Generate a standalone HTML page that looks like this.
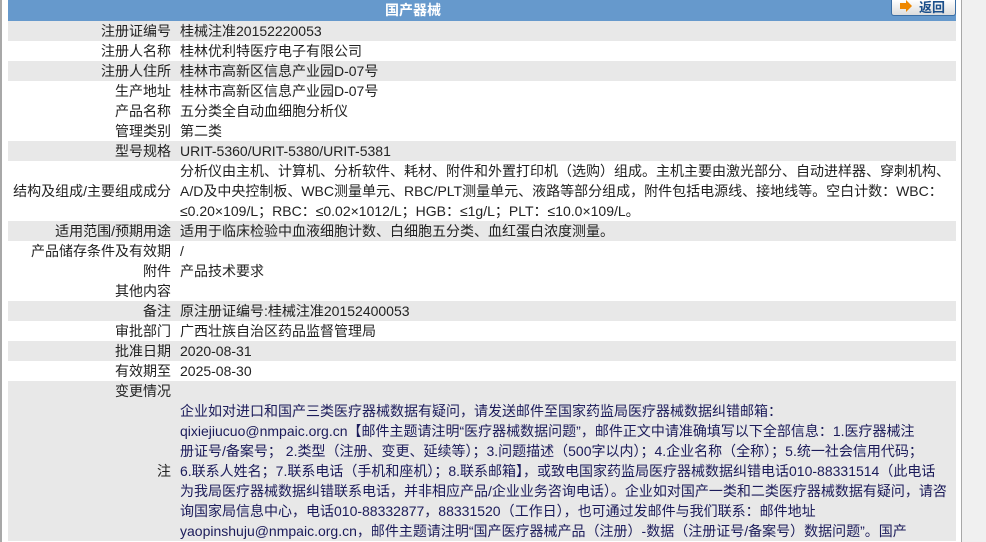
<!DOCTYPE html>
<html><head><meta charset="utf-8">
<style>
html,body{margin:0;padding:0;width:986px;height:542px;overflow:hidden;background:#fff;}
body{font-family:"Liberation Sans","Noto Sans CJK SC",sans-serif;font-size:14px;color:#222;position:relative;}
.side{position:absolute;left:961px;top:0;width:25px;height:542px;background:#f0f0f0;border-left:1px solid #a8a8a8;}
.lb{position:absolute;left:0;top:0;width:2px;height:542px;background:#a8a8a8;}
.wrap{position:absolute;left:8px;top:0;width:948px;}
.hd{height:21px;background:#6699cc;position:relative;}
.hd .t{position:absolute;left:0;width:810px;text-align:center;top:0;line-height:20px;color:#fff;font-weight:bold;font-size:14px;}
.btn{position:absolute;left:883px;top:0;width:63px;height:15px;border:1px solid #3a6ea5;border-top:none;border-radius:0 0 3px 3px;background:linear-gradient(#fff,#dcdcdc);font-size:13px;font-weight:bold;color:#1a4e8a;line-height:15px;}
.btn .a{position:absolute;left:8px;top:3px;width:6px;height:6px;background:#ee8800;}
.btn .a:after{content:"";position:absolute;left:6px;top:-3px;border-left:6px solid #ee8800;border-top:6px solid transparent;border-bottom:6px solid transparent;}
.btn .x{position:absolute;left:27px;top:0;}
table{border-collapse:collapse;width:948px;table-layout:fixed;}
td{padding:0;line-height:20px;vertical-align:middle;white-space:nowrap;}
td.l{width:163px;text-align:right;padding-right:9px;}
td.v{padding-left:0;}
tr.g td{background:#e8e8e8;}
.note{color:#1b1b5a;}
</style></head><body>
<div class="lb"></div>
<div class="side"></div>
<div class="wrap">
<div class="hd"><div class="t">国产器械</div><div class="btn"><span class="a"></span><span class="x">返回</span></div></div>
<table>
<tr class="g"><td class="l">注册证编号</td><td class="v">桂械注准20152220053</td></tr>
<tr><td class="l">注册人名称</td><td class="v">桂林优利特医疗电子有限公司</td></tr>
<tr class="g"><td class="l">注册人住所</td><td class="v">桂林市高新区信息产业园D-07号</td></tr>
<tr><td class="l">生产地址</td><td class="v">桂林市高新区信息产业园D-07号</td></tr>
<tr><td class="l">产品名称</td><td class="v">五分类全自动血细胞分析仪</td></tr>
<tr><td class="l">管理类别</td><td class="v">第二类</td></tr>
<tr class="g"><td class="l">型号规格</td><td class="v">URIT-5360/URIT-5380/URIT-5381</td></tr>
<tr><td class="l">结构及组成/主要组成成分</td><td class="v">分析仪由主机、计算机、分析软件、耗材、附件和外置打印机（选购）组成。主机主要由激光部分、自动进样器、穿刺机构、<br>A/D及中央控制板、WBC测量单元、RBC/PLT测量单元、液路等部分组成，附件包括电源线、接地线等。空白计数：WBC：<br>≤0.20×109/L；RBC：≤0.02×1012/L；HGB：≤1g/L；PLT：≤10.0×109/L。</td></tr>
<tr class="g"><td class="l">适用范围/预期用途</td><td class="v">适用于临床检验中血液细胞计数、白细胞五分类、血红蛋白浓度测量。</td></tr>
<tr><td class="l">产品储存条件及有效期</td><td class="v">/</td></tr>
<tr><td class="l">附件</td><td class="v">产品技术要求</td></tr>
<tr><td class="l">其他内容</td><td class="v"></td></tr>
<tr class="g"><td class="l">备注</td><td class="v">原注册证编号:桂械注准20152400053</td></tr>
<tr><td class="l">审批部门</td><td class="v">广西壮族自治区药品监督管理局</td></tr>
<tr class="g"><td class="l">批准日期</td><td class="v">2020-08-31</td></tr>
<tr><td class="l">有效期至</td><td class="v">2025-08-30</td></tr>
<tr class="g"><td class="l">变更情况</td><td class="v"></td></tr>
<tr class="g"><td class="l" style="vertical-align:top;padding-top:60px;">注</td><td class="v note">企业如对进口和国产三类医疗器械数据有疑问，请发送邮件至国家药监局医疗器械数据纠错邮箱：<br>qixiejiucuo@nmpaic.org.cn【邮件主题请注明“医疗器械数据问题”，邮件正文中请准确填写以下全部信息：1.医疗器械注<br>册证号/备案号； 2.类型（注册、变更、延续等）；3.问题描述（500字以内）；4.企业名称（全称）；5.统一社会信用代码；<br>6.联系人姓名；7.联系电话（手机和座机）；8.联系邮箱】，或致电国家药监局医疗器械数据纠错电话010-88331514（此电话<br>为我局医疗器械数据纠错联系电话，并非相应产品/企业业务咨询电话）。企业如对国产一类和二类医疗器械数据有疑问，请咨<br>询国家局信息中心，电话010-88332877，88331520（工作日），也可通过发邮件与我们联系：邮件地址<br>yaopinshuju@nmpaic.org.cn，邮件主题请注明“国产医疗器械产品（注册）-数据（注册证号/备案号）数据问题”。国产</td></tr>
</table>
</div>
</body></html>
